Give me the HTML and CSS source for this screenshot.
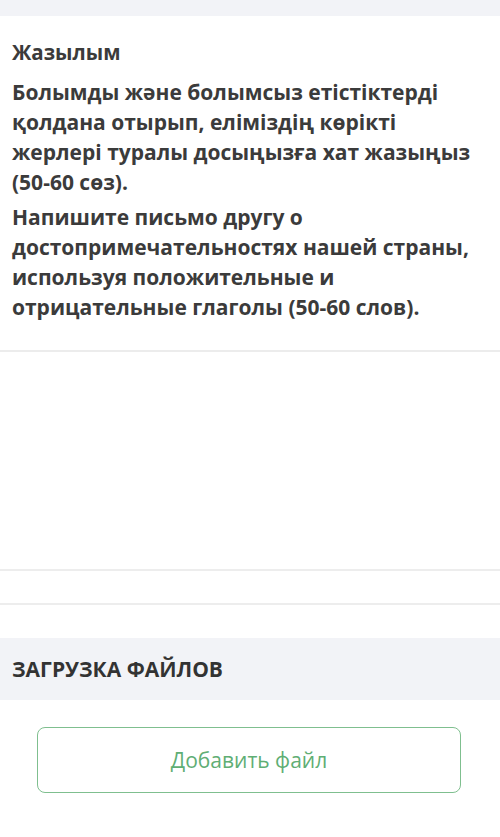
FILE: index.html
```html
<!DOCTYPE html>
<html lang="ru">
<head>
<meta charset="utf-8">
<link rel="stylesheet" href="styles.css">
</head>
<body>
<div class="topband"></div>
<section class="question">
  <h2 class="qtitle">Жазылым</h2>
  <p class="qtext">Болымды және болымсыз етістіктерді қолдана отырып, еліміздің көрікті жерлері туралы досыңызға хат жазыңыз (50-60 сөз).</p>
  <p class="qtext">Напишите письмо другу о достопримечательностях нашей страны, используя положительные и отрицательные глаголы (50-60 слов).</p>
</section>
<div class="answer"></div>
<div class="row"></div>
<div class="row last"></div>
<div class="uploadhead">ЗАГРУЗКА ФАЙЛОВ</div>
<div class="uploadbody">
  <button class="addbtn">Добавить файл</button>
</div>
</body>
</html>
```
FILE: styles.css
```css
html, body {
  margin: 0;
  padding: 0;
  background: #ffffff;
  font-family: "Open Sans", "Noto Sans", sans-serif;
  color: #3b3b3b;
}
.topband {
  height: 16px;
  background: #f2f3f7;
}
.question {
  padding: 21px 20px 0 12px;
  border-bottom: 2px solid #ececec;
  height: 336px;
  box-sizing: border-box;
}
.qtitle {
  margin: 0 0 10px 0;
  font-size: 20.5px;
  font-weight: 700;
  line-height: 30px;
}
.qtext {
  margin: 0 0 5px 0;
  font-size: 21px;
  font-weight: 700;
  line-height: 30px;
}
.answer {
  height: 217px;
  border-bottom: 2px solid #ededed;
}
.row {
  height: 32px;
  border-bottom: 2px solid #ededed;
}
.row.last {
  height: 33px;
  border-bottom: none;
}
.uploadhead {
  background: #f2f3f7;
  height: 62px;
  padding: 0 12px;
  display: flex;
  align-items: center;
  font-size: 21px;
  font-weight: 700;
  color: #333333;
}
.uploadbody {
  padding: 27px 39px 0 37px;
}
.addbtn {
  display: block;
  width: 100%;
  height: 66px;
  background: #ffffff;
  border: 1.5px solid #7fbf8f;
  border-radius: 8px;
  font-family: "Open Sans", "Noto Sans", sans-serif;
  font-size: 21px;
  color: #5fae74;
}
```
